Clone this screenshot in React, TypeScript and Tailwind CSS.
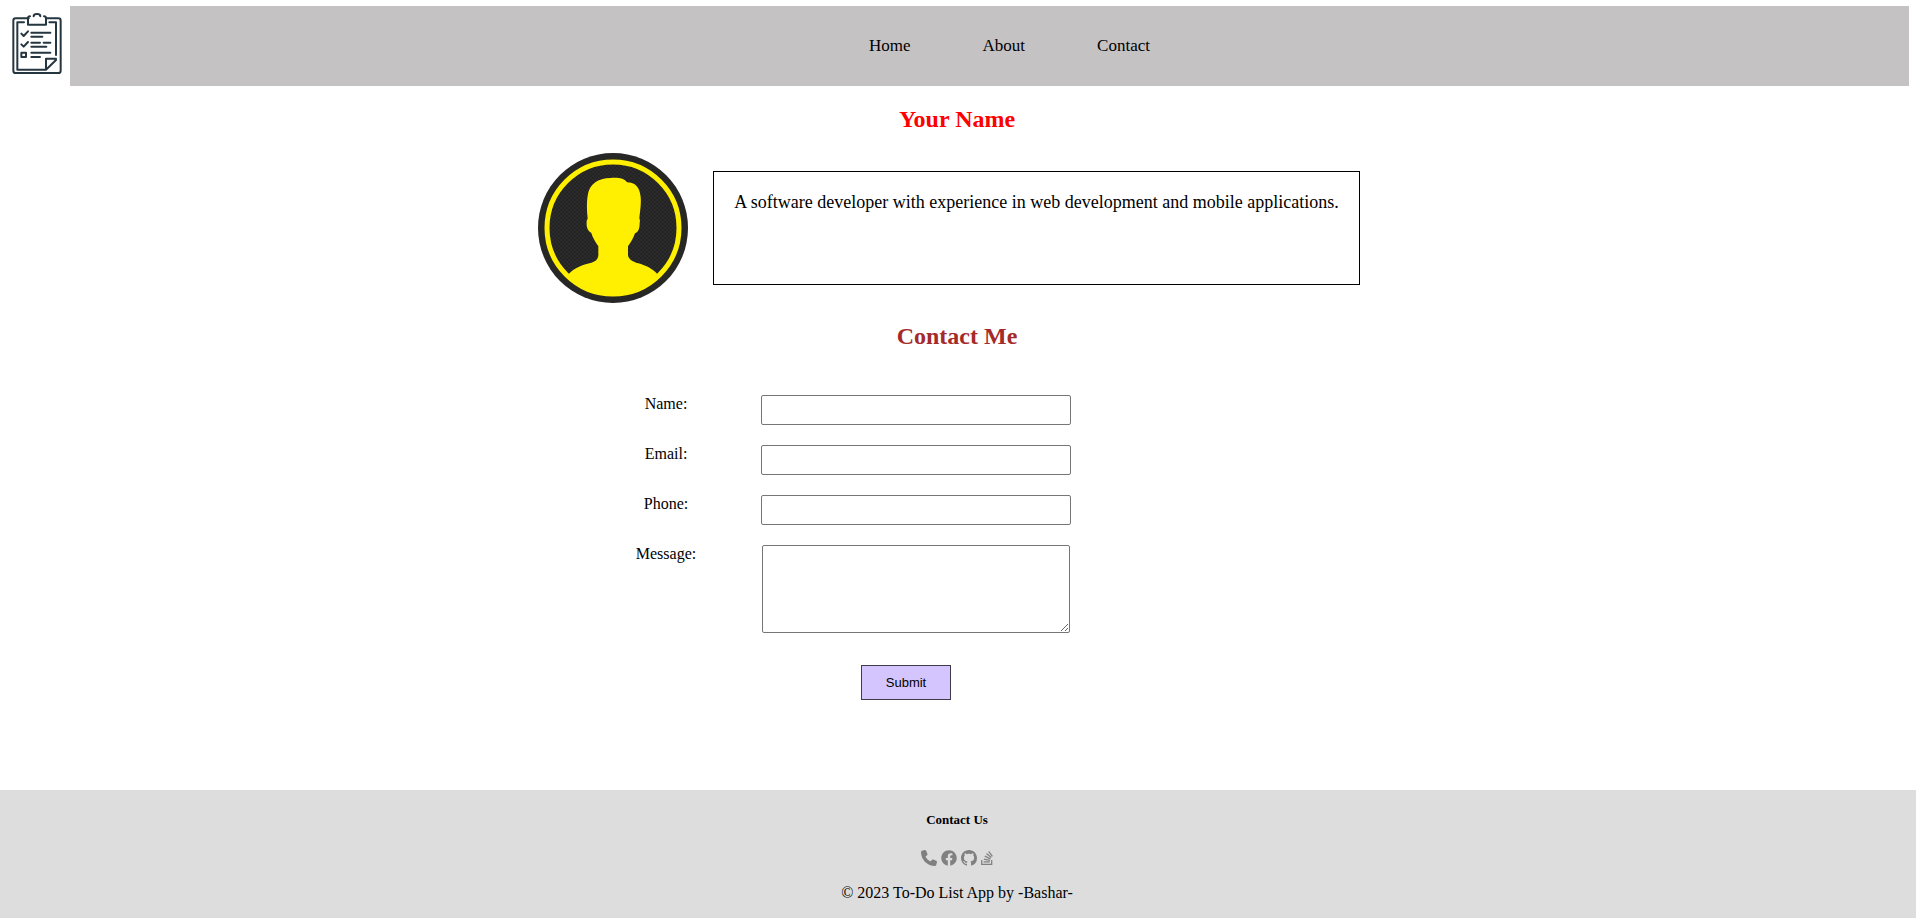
import { useId } from "react";

const navLinks = ["Home", "About", "Contact"];

const fields = [
  { id: "name", label: "Name:", type: "text" },
  { id: "email", label: "Email:", type: "email" },
  { id: "phone", label: "Phone:", type: "tel" },
];

const socials = [
  {
    label: "Phone",
    width: "w-4",
    viewBox: "0 0 512 512",
    path: "M164.900 24.600c-7.700-18.600-28-28.500-47.400-23.200l-88 24C12.100 30.200 0 46 0 64c0 247.400 200.600 448 448 448c18 0 33.800-12.100 38.600-29.500l24-88c5.300-19.400-4.600-39.700-23.200-47.400l-96-40c-16.300-6.800-35.200-2.100-46.300 11.600L304.700 368C234.300 334.700 177.300 277.700 144 207.300L193.300 167c13.700-11.200 18.400-30 11.600-46.300l-40-96z",
  },
  {
    label: "Facebook",
    width: "w-4",
    viewBox: "0 0 512 512",
    path: "M504 256C504 119 393 8 256 8S8 119 8 256c0 123.780 90.690 226.380 209.250 245V327.690h-63V256h63v-54.640c0-62.150 37-96.480 93.670-96.480 27.140 0 55.520 4.840 55.520 4.840v61h-31.280c-30.800 0-40.410 19.120-40.410 38.730V256h68.780l-11 71.690h-57.780V501C413.310 482.380 504 379.780 504 256z",
  },
  {
    label: "GitHub",
    width: "w-4",
    viewBox: "0 0 16 16",
    path: "M8 0C3.580 0 0 3.580 0 8c0 3.540 2.290 6.530 5.470 7.590.4.070.55-.17.55-.38 0-.19-.01-.82-.01-1.490-2.010.37-2.530-.49-2.690-.94-.09-.23-.48-.94-.82-1.130-.28-.15-.68-.52-.01-.53.63-.01 1.080.58 1.230.82.72 1.210 1.870.87 2.330.66.07-.52.28-.87.51-1.070-1.780-.2-3.640-.89-3.640-3.950 0-.87.31-1.590.82-2.150-.08-.2-.36-1.020.08-2.120 0 0 .67-.21 2.200.82.64-.18 1.320-.27 2-.27s1.360.09 2 .27c1.530-1.040 2.200-.82 2.200-.82.44 1.100.16 1.920.08 2.120.51.56.82 1.270.82 2.150 0 3.070-1.870 3.750-3.650 3.950.29.25.54.73.54 1.480 0 1.070-.01 1.930-.01 2.200 0 .21.15.46.55.38A8.010 8.010 0 0 0 16 8c0-4.420-3.580-8-8-8z",
  },
  {
    label: "Stack Overflow",
    width: "w-3",
    viewBox: "0 0 384 512",
    path: "M290.700 311L95 269.700 86.800 309l195.700 41zm51-87L188.200 95.700l-25.500 30.800 153.500 128.300zm-31.200 39.700L129.200 179l-16.700 36.500L293.700 300zM262 32l-32 24 119.300 160.300 32-24zm20.500 328h-200v39.700h200zm39.700 80H42.700V320h-40v160h359.500V320h-40z",
  },
];

function ClipboardLogo() {
  return (
    <svg viewBox="0 0 150 186" className="h-[62px] w-[50px]" fill="none" stroke="#263640" strokeWidth="6" strokeLinecap="round" strokeLinejoin="round" role="img" aria-label="To-Do List">
      <path d="M50 16H11q-7 0-7 7v150q0 7 7 7h128q7 0 7-7V23q0-7-7-7h-35" />
      <path d="M36 28H16v142h86l30-29V137H102v33M112 28h20v98" />
      <path d="M54 10q-6 0-6 7v18h54V17q0-7-6-7M65 10q0-7 10-7t10 7" />
      <path d="M28 62l7 7 13-14M28 94l7 7 13-14" />
      <path d="M28 119h14v13H28z" />
      <path d="M58 59h57M58 71h33M58 89h26M95 89h20M58 101h45M58 119h57M58 132h26" />
    </svg>
  );
}

function Avatar() {
  const pattern = useId();
  return (
    <svg viewBox="0 0 450 450" className="size-[150px] shrink-0" role="img" aria-label="Profile">
      <defs>
        <pattern id={pattern} width="12" height="12" patternUnits="userSpaceOnUse">
          <rect width="12" height="12" fill="#232323" />
          <path d="M0 0h6v6H0zM6 6h6v6H6z" fill="#2b2b2b" />
        </pattern>
      </defs>
      <circle cx="225" cy="225" r="225" fill="#272726" />
      <circle cx="225" cy="225" r="198" fill={`url(#${pattern})`} stroke="#ffef00" strokeWidth="15" />
      <path
        d="M92 363C111 344 132 337 154 331C174 326 181 317 181 306V280C172 266 163 253 160 240C148 233 145 221 146 208Q145 202 149 197C146 172 146 147 149 128C153 94 181 75 217 75C240 73 260 76 267 88C292 88 305 103 308 132C310 153 306 176 304 196Q307 202 305 211C305 227 301 237 291 241C287 254 279 267 270 280V306C270 317 283 326 301 331C322 337 341 345 358 363L360 368A196 196 0 0 1 90 368Z"
        fill="#ffef00"
      />
    </svg>
  );
}

export default function App() {
  return (
    <div className="flex min-h-screen flex-col bg-white font-['Liberation_Serif',serif] text-base leading-[18px] text-black">
      <header className="flex pt-1.5 pr-[7px]">
        <a href="#home" className="flex w-[70px] shrink-0 items-start pt-[7px] pl-3">
          <ClipboardLogo />
        </a>
        <nav className="flex h-20 flex-1 items-center justify-center bg-[#c5c2c3] pl-10">
          <ul className="flex gap-18 text-[17px]">
            {navLinks.map((link) => (
              <li key={link}>
                <a href={`#${link.toLowerCase()}`}>{link}</a>
              </li>
            ))}
          </ul>
        </nav>
      </header>

      <main className="pr-0.5">
        <section id="about">
          <h2 className="my-5 text-center text-2xl leading-[27px] font-bold text-[#ff0000]">Your Name</h2>
          <div className="flex items-center justify-center gap-[25px] pr-4">
            <Avatar />
            <div className="h-[114px] border border-black p-5 text-lg leading-5">
              <p>A software developer with experience in web development and mobile applications.</p>
            </div>
          </div>
        </section>

        <section id="contact">
          <h2 className="mt-5 mb-[45px] text-center text-2xl leading-[27px] font-bold text-[#a52a2a]">Contact Me</h2>
          <form className="mx-auto flex max-w-[682px] flex-col gap-5" onSubmit={(e) => e.preventDefault()}>
            {fields.map((field) => (
              <div key={field.id} className="flex items-start gap-[45px]">
                <label htmlFor={field.id} className="w-[100px] text-center">
                  {field.label}
                </label>
                <input id={field.id} type={field.type} className="h-[30px] w-[310px] rounded-xs border border-[#767676] bg-white px-1" />
              </div>
            ))}
            <div className="flex items-start gap-[45px]">
              <label htmlFor="message" className="w-[100px] text-center">
                Message:
              </label>
              <div className="w-[310px] px-px">
                <textarea id="message" className="block h-22 w-full resize rounded-xs border border-[#767676] bg-white p-0.5" />
              </div>
            </div>
            <div className="flex w-[580px] justify-center pt-3">
              <button type="submit" className="h-[35px] w-[90px] border border-[#3f3b47] bg-[#d4c5ff] font-['Liberation_Sans',sans-serif] text-[13px]">
                Submit
              </button>
            </div>
          </form>
        </section>
      </main>

      <footer className="mt-auto flex h-32 flex-col items-center bg-[#dddddd] pt-[22px] pr-0.5">
        <h5 className="text-[13px] leading-[15px] font-bold">Contact Us</h5>
        <div className="mt-[23px] flex gap-1">
          {socials.map((social) => (
            <a key={social.label} href="#contact" aria-label={social.label} className="text-[#808080]">
              <svg viewBox={social.viewBox} className={`h-4 ${social.width}`} fill="currentColor" aria-hidden="true">
                <path d={social.path} />
              </svg>
            </a>
          ))}
        </div>
        <p className="mt-[18px]">© 2023 To-Do List App by -Bashar-</p>
      </footer>
    </div>
  );
}
